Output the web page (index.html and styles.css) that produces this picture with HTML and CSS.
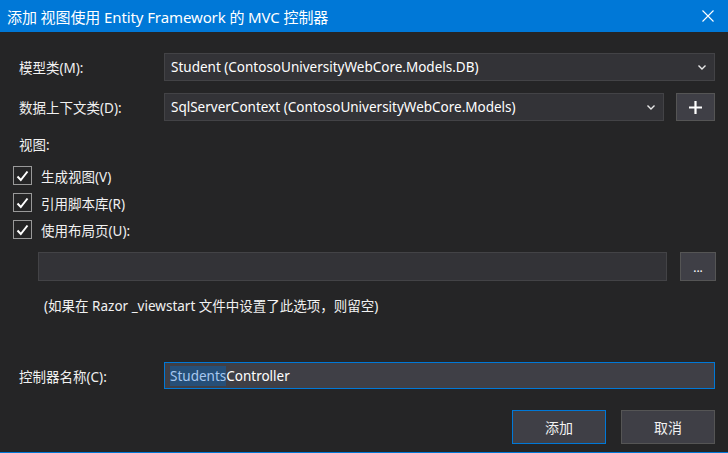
FILE: index.html
```html
<!DOCTYPE html>
<html>
<head>
<meta charset="utf-8">
<link rel="stylesheet" href="styles.css">
</head>
<body>
<div class="dialog">
  <div class="titlebar">
    <span class="title">添加 视图使用 Entity Framework 的 MVC 控制器</span>
    <svg class="close" width="12" height="12" viewBox="0 0 12 12"><path d="M0.5 0.5 L11.5 11.5 M11.5 0.5 L0.5 11.5" stroke="#ffffff" stroke-width="1.1" fill="none"/></svg>
  </div>
  <div class="body">
    <div class="row row-model">
      <span class="label">模型类(M):</span>
      <div class="combo combo-full">
        <span class="combo-text">Student (ContosoUniversityWebCore.Models.DB)</span>
        <svg class="arrow" width="8" height="5" viewBox="0 0 8 5"><path d="M0.5 0.5 L4 4 L7.5 0.5" stroke="#e8e8e8" stroke-width="1.4" fill="none"/></svg>
      </div>
    </div>
    <div class="row row-context">
      <span class="label">数据上下文类(D):</span>
      <div class="combo combo-ctx">
        <span class="combo-text">SqlServerContext (ContosoUniversityWebCore.Models)</span>
        <svg class="arrow" width="8" height="5" viewBox="0 0 8 5"><path d="M0.5 0.5 L4 4 L7.5 0.5" stroke="#e8e8e8" stroke-width="1.4" fill="none"/></svg>
      </div>
      <div class="btn-plus">
        <svg width="13" height="13" viewBox="0 0 13 13"><path d="M6.5 0 V13 M0 6.5 H13" stroke="#ffffff" stroke-width="2.2" fill="none"/></svg>
      </div>
    </div>
    <div class="section-label">视图:</div>
    <div class="checks">
      <div class="check-row"><span class="box"><svg width="13" height="12" viewBox="0 0 13 12"><path d="M1.5 6.5 L4.8 10 L11.5 1.5" stroke="#ffffff" stroke-width="2" fill="none"/></svg></span><span class="check-label">生成视图(V)</span></div>
      <div class="check-row"><span class="box"><svg width="13" height="12" viewBox="0 0 13 12"><path d="M1.5 6.5 L4.8 10 L11.5 1.5" stroke="#ffffff" stroke-width="2" fill="none"/></svg></span><span class="check-label">引用脚本库(R)</span></div>
      <div class="check-row"><span class="box"><svg width="13" height="12" viewBox="0 0 13 12"><path d="M1.5 6.5 L4.8 10 L11.5 1.5" stroke="#ffffff" stroke-width="2" fill="none"/></svg></span><span class="check-label">使用布局页(U):</span></div>
    </div>
    <div class="layout-row">
      <div class="text-input layout-input"></div>
      <div class="btn-browse">...</div>
    </div>
    <div class="hint">(如果在 Razor _viewstart 文件中设置了此选项，则留空)</div>
    <div class="row row-name">
      <span class="label">控制器名称(C):</span>
      <div class="name-input"><span class="sel">Students</span>Controller</div>
    </div>
    <div class="buttons">
      <div class="btn btn-primary">添加</div>
      <div class="btn">取消</div>
    </div>
  </div>
</div>
</body>
</html>
```
FILE: styles.css
```css
html, body {
  margin: 0;
  padding: 0;
  background: #252526;
}
.dialog {
  width: 728px;
  height: 453px;
  box-sizing: border-box;
  background: #252526;
  border-bottom: 1px solid #0078d7;
  font-family: "Noto Sans", "Noto Sans CJK SC", sans-serif;
  color: #f1f1f1;
  font-size: 13.5px;
  display: flex;
  flex-direction: column;
}
.titlebar {
  height: 32px;
  background: #0078d7;
  display: flex;
  align-items: center;
  justify-content: space-between;
  padding: 0 14px 0 7px;
  flex-shrink: 0;
}
.title {
  font-size: 15px;
  color: #ffffff;
  letter-spacing: -0.1px;
}
.close {
  display: block;
}
.body {
  display: flex;
  flex-direction: column;
  padding: 21px 0 0 0;
}
.row {
  display: flex;
  align-items: center;
  height: 28px;
}
.label {
  width: 145px;
  padding-left: 19px;
  flex-shrink: 0;
}
.row-context {
  margin-top: 12px;
}
.combo {
  height: 28px;
  box-sizing: border-box;
  background: #333337;
  border: 1px solid #434346;
  display: flex;
  align-items: center;
  justify-content: space-between;
  padding: 0 8px 0 6px;
  color: #ffffff;
}
.combo-full {
  width: 551px;
}
.combo-ctx {
  width: 500px;
}
.arrow {
  display: block;
}
.btn-plus {
  width: 39px;
  height: 28px;
  box-sizing: border-box;
  margin-left: 12px;
  background: #3f3f46;
  border: 1px solid #555555;
  display: flex;
  align-items: center;
  justify-content: center;
}
.btn-plus svg {
  display: block;
}
.section-label {
  padding-left: 19px;
  margin-top: 12px;
  height: 24px;
  line-height: 24px;
}
.checks {
  display: flex;
  flex-direction: column;
  gap: 8px;
  margin-top: 9px;
  padding-left: 13px;
}
.check-row {
  display: flex;
  align-items: center;
  height: 19px;
}
.box {
  width: 19px;
  height: 19px;
  box-sizing: border-box;
  border: 1px solid #999999;
  display: flex;
  align-items: center;
  justify-content: center;
}
.box svg {
  display: block;
}
.check-label {
  margin-left: 9px;
}
.layout-row {
  display: flex;
  margin-top: 13px;
  padding-left: 38px;
  height: 29px;
}
.text-input {
  height: 29px;
  box-sizing: border-box;
  background: #333337;
  border: 1px solid #434346;
}
.layout-input {
  width: 629px;
}
.btn-browse {
  width: 36px;
  height: 29px;
  box-sizing: border-box;
  margin-left: 13px;
  background: #3f3f46;
  border: 1px solid #555555;
  color: #ffffff;
  font-size: 12px;
  display: flex;
  align-items: flex-end;
  justify-content: center;
  padding-bottom: 6px;
  line-height: 12px;
}
.hint {
  padding-left: 44px;
  margin-top: 14px;
  height: 22px;
  line-height: 22px;
}
.row-name {
  margin-top: 45px;
  height: 27px;
}
.name-input {
  width: 551px;
  height: 27px;
  box-sizing: border-box;
  background: #3f3f46;
  border: 1px solid #0078d7;
  padding: 0 0 0 5px;
  display: flex;
  align-items: center;
  color: #ffffff;
}
.sel {
  background: #264f78;
  color: #a8c8f0;
  line-height: 20px;
}
.buttons {
  display: flex;
  justify-content: flex-end;
  gap: 15px;
  margin-top: 21px;
  padding-right: 13px;
}
.btn {
  width: 94px;
  height: 34px;
  box-sizing: border-box;
  background: #3f3f46;
  border: 1px solid #555555;
  display: flex;
  align-items: center;
  justify-content: center;
  font-size: 14px;
  color: #f1f1f1;
}
.btn-primary {
  border-color: #0078d7;
}
```
